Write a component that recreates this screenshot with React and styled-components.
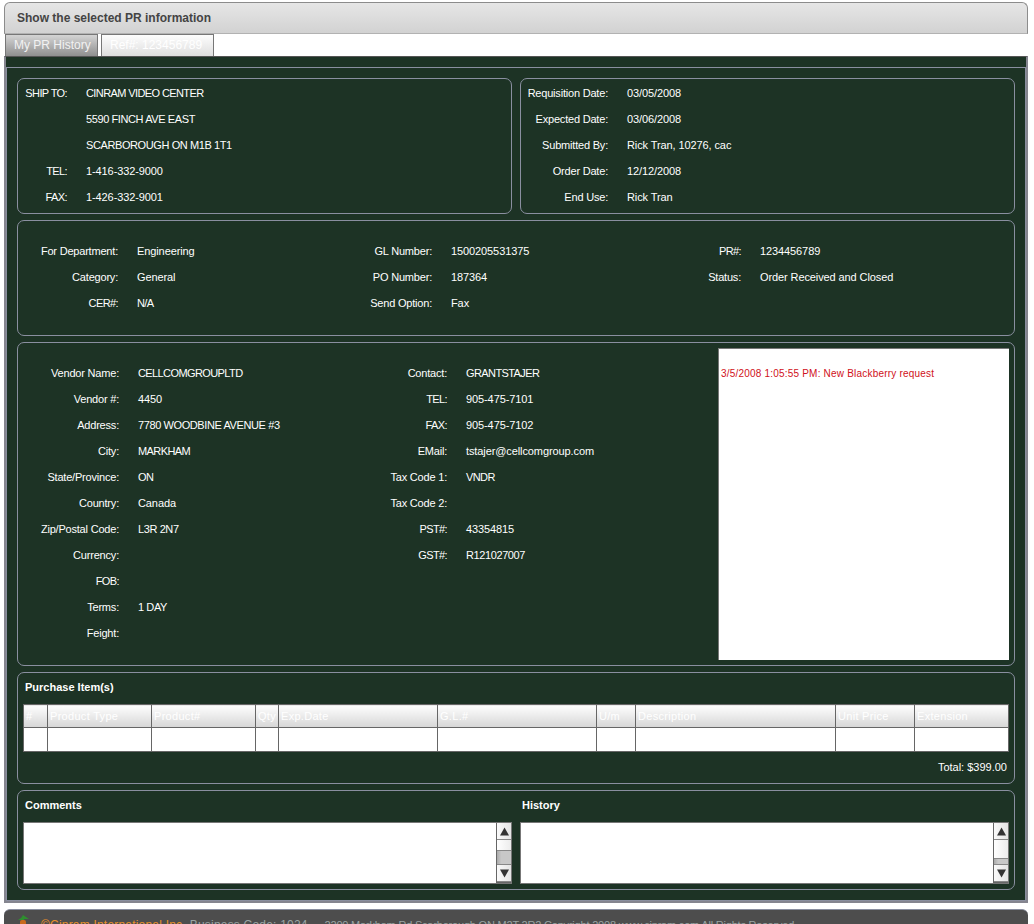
import styled, { createGlobalStyle } from "styled-components";

const GlobalStyle = createGlobalStyle`
  html, body {
    margin: 0;
    padding: 0;
    background: #fff;
  }
  body {
    font-family: "Liberation Sans", Arial, sans-serif;
    font-size: 11px;
  }
`;

const shipRows = [
  ["SHIP TO:", "CINRAM VIDEO CENTER"],
  ["", "5590 FINCH AVE EAST"],
  ["", "SCARBOROUGH ON M1B 1T1"],
  ["TEL:", "1-416-332-9000"],
  ["FAX:", "1-426-332-9001"],
];

const dateRows = [
  ["Requisition Date:", "03/05/2008"],
  ["Expected Date:", "03/06/2008"],
  ["Submitted By:", "Rick Tran, 10276, cac"],
  ["Order Date:", "12/12/2008"],
  ["End Use:", "Rick Tran"],
];

const orderCols = [
  {
    labelWidth: 100,
    width: 300,
    rows: [
      ["For Department:", "Engineering"],
      ["Category:", "General"],
      ["CER#:", "N/A"],
    ],
  },
  {
    labelWidth: 114,
    width: 300,
    rows: [
      ["GL Number:", "1500205531375"],
      ["PO Number:", "187364"],
      ["Send Option:", "Fax"],
    ],
  },
  {
    labelWidth: 123,
    width: 270,
    rows: [
      ["PR#:", "1234456789"],
      ["Status:", "Order Received and Closed"],
    ],
  },
];

const vendorRows = [
  ["Vendor Name:", "CELLCOMGROUPLTD"],
  ["Vendor #:", "4450"],
  ["Address:", "7780 WOODBINE AVENUE #3"],
  ["City:", "MARKHAM"],
  ["State/Province:", "ON"],
  ["Country:", "Canada"],
  ["Zip/Postal Code:", "L3R 2N7"],
  ["Currency:", ""],
  ["FOB:", ""],
  ["Terms:", "1 DAY"],
  ["Feight:", ""],
];

const contactRows = [
  ["Contact:", "GRANTSTAJER"],
  ["TEL:", "905-475-7101"],
  ["FAX:", "905-475-7102"],
  ["EMail:", "tstajer@cellcomgroup.com"],
  ["Tax Code 1:", "VNDR"],
  ["Tax Code 2:", ""],
  ["PST#:", "43354815"],
  ["GST#:", "R121027007"],
];

const columns = [
  ["#", 24],
  ["Product Type", 104],
  ["Product#", 104],
  ["Qty", 23],
  ["Exp.Date", 159],
  ["G.L.#", 159],
  ["U/m", 39],
  ["Description", 200],
  ["Unit Price", 79],
  ["Extension", 94],
];

// all-caps strings run narrower in the original, less so when they hold digits
const spacing = (s, normal) => {
  if (!/[A-Z]/.test(s) || /[a-z]/.test(s)) return /[a-z]/.test(s) ? normal : "-0.1px";
  return /[0-9]/.test(s) ? "-0.4px" : "-0.6px";
};

function Fields({ rows, labelWidth, width }) {
  return (
    <FieldGrid $labelWidth={labelWidth} $width={width}>
      {rows.map(([label, value], i) => (
        <Field key={i}>
          <Label $spacing={spacing(label, "-0.2px")}>{label}</Label>
          <Value $spacing={spacing(value, "-0.1px")}>{value}</Value>
        </Field>
      ))}
    </FieldGrid>
  );
}

function Arrow({ up }) {
  return (
    <svg width="9" height="9" viewBox="0 0 9 9">
      <polygon points={up ? "4.5,0.5 9,8.5 0,8.5" : "0,0.5 9,0.5 4.5,8.5"} fill="#333" />
    </svg>
  );
}

function Scrollbar({ trackHeight, thumbHeight }) {
  return (
    <Bar>
      <ArrowButton>
        <Arrow up />
      </ArrowButton>
      <Track $height={trackHeight} />
      <Thumb $height={thumbHeight} />
      <ArrowButton>
        <Arrow />
      </ArrowButton>
    </Bar>
  );
}

export default function App() {
  return (
    <Page>
      <GlobalStyle />
      <Window>
        <TitleBar>Show the selected PR information</TitleBar>
        <Tabs>
          <Tab>My PR History</Tab>
          <Tab $active>Ref#: 123456789</Tab>
        </Tabs>
        <Body>
          <Frame>
            <Row>
              <HalfPanel>
                <Fields rows={shipRows} labelWidth={49} />
              </HalfPanel>
              <HalfPanel>
                <Fields rows={dateRows} labelWidth={87} />
              </HalfPanel>
            </Row>
            <OrderPanel>
              {orderCols.map((col, i) => (
                <Fields key={i} rows={col.rows} labelWidth={col.labelWidth} width={col.width} />
              ))}
            </OrderPanel>
            <VendorPanel>
              <VendorFields>
                <Fields rows={vendorRows} labelWidth={101} width={300} />
                <Fields rows={contactRows} labelWidth={129} width={300} />
              </VendorFields>
              <Notes>3/5/2008 1:05:55 PM: New Blackberry request</Notes>
            </VendorPanel>
            <ItemsPanel>
              <PanelTitle>Purchase Item(s)</PanelTitle>
              <ItemsTable>
                <colgroup>
                  {columns.map(([name, w]) => (
                    <col key={name} style={{ width: w }} />
                  ))}
                </colgroup>
                <thead>
                  <tr>
                    {columns.map(([name]) => (
                      <HeadCell key={name}>{name}</HeadCell>
                    ))}
                  </tr>
                </thead>
                <tbody>
                  <tr>
                    {columns.map(([name]) => (
                      <BodyCell key={name} />
                    ))}
                  </tr>
                </tbody>
              </ItemsTable>
              <Total>Total: $399.00</Total>
            </ItemsPanel>
            <NotesPanel>
              <NoteColumn>
                <PanelTitle>Comments</PanelTitle>
                <TextBox>
                  <Scrollbar trackHeight={10} thumbHeight={13} />
                </TextBox>
              </NoteColumn>
              <NoteColumn>
                <PanelTitle>History</PanelTitle>
                <TextBox>
                  <Scrollbar trackHeight={18} thumbHeight={5} />
                </TextBox>
              </NoteColumn>
            </NotesPanel>
          </Frame>
        </Body>
      </Window>
      <Footer>
        <svg width="12" height="16" viewBox="0 0 12 16">
          <polygon points="6,0 12,4 7,4 7,5 1,5 4,3" fill="#2f8f2f" />
          <rect x="3" y="5" width="6" height="11" rx="2" fill="#c8691c" />
        </svg>
        <Brand>©Cinram International Inc.</Brand>
        <FooterCode>Business Code: 1024 --</FooterCode>
        <FooterAddress>
          2200 Markham Rd Scarborough ON M2T 2R2 Copyright 2008 www.cinram.com All Rights Reserved
        </FooterAddress>
      </Footer>
    </Page>
  );
}

const Page = styled.div`
  width: 1034px;
  height: 924px;
  overflow: hidden;
  padding: 2px 6px 0 4px;
  box-sizing: border-box;
  display: flex;
  flex-direction: column;
`;

const Window = styled.div`
  width: 1024px;
  flex: none;
`;

const TitleBar = styled.div`
  height: 30px;
  border: 1px solid #8c8c8c;
  border-bottom: 1px solid #b2b2b2;
  border-radius: 6px 6px 0 0;
  background: linear-gradient(#e6e6e6, #d2d2d2);
  color: #444;
  font-size: 12px;
  font-weight: bold;
  line-height: 30px;
  padding-left: 12px;
`;

const Tabs = styled.div`
  display: flex;
  gap: 3px;
  height: 22px;
  padding-left: 1px;
  background: #fff;
  align-items: flex-end;
`;

const Tab = styled.div`
  height: 22px;
  box-sizing: border-box;
  border: 1px solid #777;
  border-bottom: none;
  padding-left: 8px;
  line-height: 21px;
  font-size: 12px;
  white-space: nowrap;
  color: ${(p) => (p.$active ? "#fff" : "#f2f2f2")};
  background: ${(p) =>
    p.$active
      ? "linear-gradient(#fdfdfd, #dedede)"
      : "linear-gradient(#d4d4d4, #8f8f8f)"};
  width: ${(p) => (p.$active ? "113px" : "93px")};
`;

const Body = styled.div`
  background: #1d3325;
  border: 2px solid #85858f;
  border-top: 1px solid #555;
  padding-top: 10px;
  box-sizing: border-box;
  height: 847px;
`;

const Frame = styled.div`
  border: 1px solid #8a8fa0;
  padding: 10px;
  display: flex;
  flex-direction: column;
  gap: 6px;
`;

const Row = styled.div`
  display: flex;
  gap: 8px;
`;

const Panel = styled.div`
  flex: none;
  border: 1px solid #8a8fa0;
  border-radius: 7px;
  box-sizing: border-box;
  color: #fff;
`;

const HalfPanel = styled(Panel)`
  width: 495px;
  height: 136px;
  padding-top: 1px;
`;

const OrderPanel = styled(Panel)`
  height: 116px;
  padding-top: 17px;
  display: flex;
`;

const VendorPanel = styled(Panel)`
  height: 324px;
  padding: 5px 5px 0 0;
  display: flex;
  justify-content: space-between;
`;

const VendorFields = styled.div`
  display: flex;
  padding-top: 12px;
`;

const ItemsPanel = styled(Panel)`
  height: 112px;
  padding: 0 5px;
`;

const NotesPanel = styled(Panel)`
  height: 100px;
  padding-left: 5px;
  display: flex;
  gap: 8px;
`;

const NoteColumn = styled.div`
  width: 489px;
`;

const PanelTitle = styled.div`
  font-size: 11px;
  font-weight: bold;
  height: 31px;
  line-height: 29px;
  padding-left: 2px;
`;

const FieldGrid = styled.div`
  width: ${(p) => (p.$width ? `${p.$width}px` : "auto")};
  flex: none;
  display: grid;
  grid-template-columns: ${(p) => p.$labelWidth}px 1fr;
  grid-auto-rows: 26px;
  column-gap: 19px;
`;

const Field = styled.div`
  display: contents;
`;

const Label = styled.span`
  text-align: right;
  line-height: 26px;
  font-size: 11px;
  white-space: nowrap;
  letter-spacing: ${(p) => p.$spacing};
`;

const Value = styled.span`
  line-height: 26px;
  font-size: 11px;
  white-space: nowrap;
  letter-spacing: ${(p) => p.$spacing};
`;

const Notes = styled.div`
  width: 291px;
  height: 312px;
  box-sizing: border-box;
  background: #fff;
  border-top: 1px solid #777;
  border-left: 1px solid #777;
  color: #d01020;
  font-size: 10px;
  letter-spacing: 0.2px;
  line-height: 12px;
  padding: 19px 2px 0;
  white-space: nowrap;
`;

const ItemsTable = styled.table`
  table-layout: fixed;
  border-collapse: collapse;
  width: 985px;
  background: #fff;
`;

const HeadCell = styled.th`
  height: 22px;
  padding: 0 2px;
  border: 1px solid #666;
  background: linear-gradient(#fefefe, #d6d6d6);
  color: #fff;
  font-size: 11px;
  font-weight: normal;
  letter-spacing: 0.3px;
  text-align: left;
  white-space: nowrap;
  overflow: hidden;
`;

const BodyCell = styled.td`
  height: 23px;
  padding: 0;
  border: 1px solid #666;
  background: #fff;
`;

const Total = styled.div`
  text-align: right;
  font-size: 11px;
  line-height: 30px;
  padding-right: 2px;
`;

const TextBox = styled.div`
  height: 62px;
  box-sizing: border-box;
  background: #fff;
  border: 1px solid #777;
  display: flex;
  justify-content: flex-end;
`;

const Bar = styled.div`
  width: 15px;
  box-sizing: border-box;
  border-left: 1px solid #666;
  border-bottom: 1px solid #666;
  display: flex;
  flex-direction: column;
  background: #f4f4f4;
`;

const ArrowButton = styled.div`
  height: 17px;
  flex: none;
  display: flex;
  align-items: center;
  justify-content: center;
  background: linear-gradient(90deg, #fafafa, #e4e4e4);
  border-bottom: 1px solid #888;
  box-sizing: border-box;
`;

const Track = styled.div`
  height: ${(p) => p.$height}px;
  background: linear-gradient(90deg, #fff, #ececec);
  border-bottom: 1px solid #888;
  flex: none;
`;

const Thumb = styled.div`
  height: ${(p) => p.$height}px;
  flex: none;
  background: linear-gradient(90deg, #aaa, #c8c8c8 30%);
  border-bottom: 1px solid #888;
`;

const Footer = styled.div`
  margin-top: 6px;
  flex: none;
  width: 1024px;
  height: 30px;
  box-sizing: border-box;
  background: #4d4d4d;
  border-top: 1px solid #8a8fa0;
  border-radius: 6px 6px 0 0;
  padding: 5px 0 0 13px;
  display: flex;
  align-items: flex-start;
  font-size: 12px;
  white-space: nowrap;
`;

const Brand = styled.span`
  color: #e8902a;
  line-height: 14px;
  margin: 3px 0 0 12px;
  letter-spacing: 0.2px;
`;

const FooterCode = styled.span`
  color: #9aa4a4;
  line-height: 14px;
  margin: 3px 0 0 4px;
  letter-spacing: 0.2px;
`;

const FooterAddress = styled.span`
  color: #9aa4a4;
  font-size: 11px;
  letter-spacing: -0.2px;
  line-height: 14px;
  margin: 3px 0 0 5px;
`;
